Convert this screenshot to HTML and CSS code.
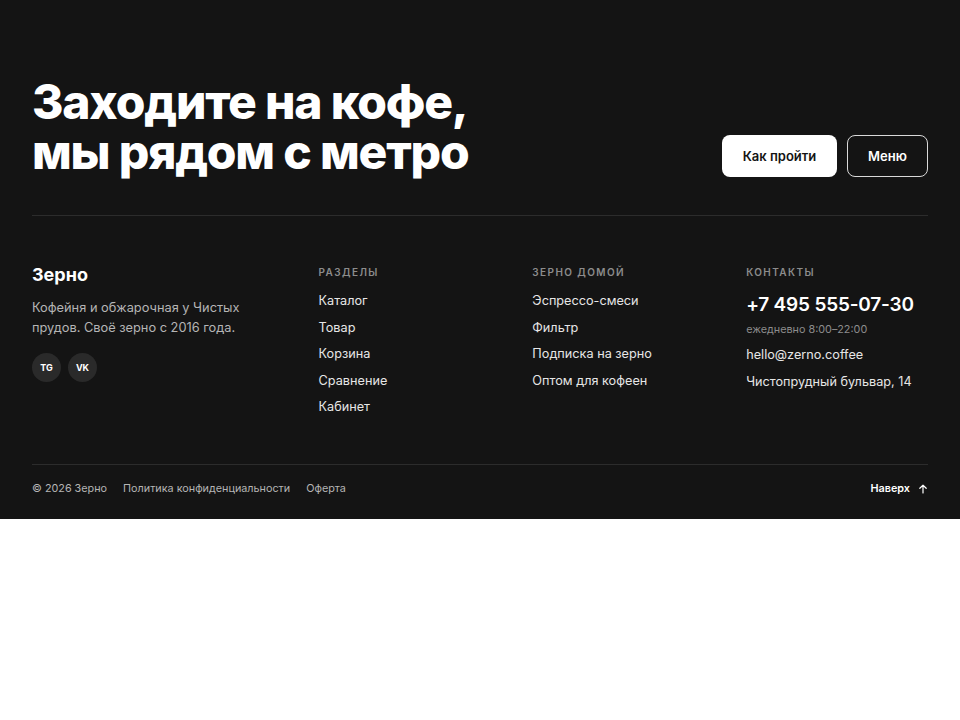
FILE: index.html
```html
<!DOCTYPE html>
<html lang="ru">
<head>
    <meta charset="UTF-8">
    <meta name="viewport" content="width=device-width, initial-scale=1.0">
    <title>Зерно — кофейня</title>
    <link rel="stylesheet" href="styles.css">
</head>
<body>
    <footer class="footer">
        <!-- Призыв зайти -->
        <div class="footer-cta">
            <h2 class="cta-title">Заходите на кофе,<br>мы рядом с метро</h2>
            <div class="cta-actions">
                <a href="#" class="btn btn-light">Как пройти</a>
                <a href="#" class="btn btn-outline">Меню</a>
            </div>
        </div>

        <!-- Колонки -->
        <div class="footer-grid">
            <div class="footer-brand">
                <div class="brand-name">Зерно</div>
                <p class="brand-text">Кофейня и обжарочная у Чистых прудов. Своё зерно с 2016 года.</p>
                <div class="socials">
                    <a href="#" class="social">TG</a>
                    <a href="#" class="social">VK</a>
                </div>
            </div>

            <div class="footer-col">
                <div class="col-title">Разделы</div>
                <a href="#" class="col-link">Каталог</a>
                <a href="#" class="col-link">Товар</a>
                <a href="#" class="col-link">Корзина</a>
                <a href="#" class="col-link">Сравнение</a>
                <a href="#" class="col-link">Кабинет</a>
            </div>

            <div class="footer-col">
                <div class="col-title">Зерно домой</div>
                <a href="#" class="col-link">Эспрессо-смеси</a>
                <a href="#" class="col-link">Фильтр</a>
                <a href="#" class="col-link">Подписка на зерно</a>
                <a href="#" class="col-link">Оптом для кофеен</a>
            </div>

            <div class="footer-col">
                <div class="col-title">Контакты</div>
                <a href="#" class="phone">+7 495 555-07-30</a>
                <div class="hours">ежедневно 8:00–22:00</div>
                <a href="#" class="col-link">hello@zerno.coffee</a>
                <div class="col-link">Чистопрудный бульвар, 14</div>
            </div>
        </div>

        <!-- Нижняя строка -->
        <div class="footer-bottom">
            <div class="bottom-left">
                <span>© 2026 Зерно</span>
                <a href="#">Политика конфиденциальности</a>
                <a href="#">Оферта</a>
            </div>
            <a href="#" class="to-top">Наверх
                <svg width="10" height="10" viewBox="0 0 10 10" fill="none" stroke="currentColor" stroke-width="1.2" stroke-linecap="round" stroke-linejoin="round">
                    <path d="M5 9V1.2M1.8 4.3L5 1.2l3.2 3.1"/>
                </svg>
            </a>
        </div>
    </footer>
</body>
</html>
```

FILE: styles.css
```css
* {
    margin: 0;
    padding: 0;
    box-sizing: border-box;
}

body {
    background: #ffffff;
    font-family: 'Inter', 'Noto Sans', sans-serif;
    -webkit-font-smoothing: antialiased;
}

a {
    color: inherit;
    text-decoration: none;
}

.footer {
    background: #141414;
    color: #ffffff;
    padding: 77px 32px 0;
}

.footer-cta {
    display: flex;
    justify-content: space-between;
    align-items: flex-end;
    padding-bottom: 38px;
    border-bottom: 1px solid #2c2c2c;
}

.cta-title {
    font-size: 48px;
    line-height: 50px;
    font-weight: 800;
    letter-spacing: -0.025em;
}

.cta-actions {
    display: flex;
    gap: 10px;
}

.btn {
    display: inline-flex;
    align-items: center;
    justify-content: center;
    height: 42px;
    border-radius: 8px;
    font-size: 13px;
    font-weight: 600;
}

.btn-light {
    background: #ffffff;
    color: #141414;
    width: 115px;
}

.btn-outline {
    border: 1px solid #d9d9d9;
    color: #ffffff;
    width: 81px;
}

.footer-grid {
    display: grid;
    grid-template-columns: 1.4fr 1fr 1fr 1fr;
    gap: 32px;
    padding: 47px 0 39px;
    border-bottom: 1px solid #2c2c2c;
}

.brand-name {
    font-size: 18px;
    font-weight: 700;
    line-height: 24px;
    margin-bottom: 11px;
}

.brand-text {
    font-size: 12.8px;
    line-height: 20px;
    color: #b5b5b5;
    max-width: 230px;
}

.socials {
    display: flex;
    gap: 7px;
    margin-top: 15px;
}

.social {
    width: 29px;
    height: 29px;
    border-radius: 50%;
    background: #2a2a2a;
    display: flex;
    align-items: center;
    justify-content: center;
    font-size: 9px;
    font-weight: 700;
}

.footer-col {
    display: flex;
    flex-direction: column;
    align-items: flex-start;
    padding-top: 2px;
}

.col-title {
    font-size: 10px;
    line-height: 14px;
    font-weight: 600;
    letter-spacing: 0.14em;
    text-transform: uppercase;
    color: #8c8c8c;
    margin-bottom: 13px;
}

.col-link {
    font-size: 12.7px;
    line-height: 18px;
    color: #e6e6e6;
    margin-bottom: 8.5px;
}

.phone {
    font-size: 19px;
    line-height: 24px;
    font-weight: 600;
    letter-spacing: -0.01em;
    margin-top: 1px;
}

.hours {
    font-size: 10.8px;
    line-height: 14px;
    color: #8c8c8c;
    margin: 6px 0 9px;
}

.footer-bottom {
    display: flex;
    justify-content: space-between;
    align-items: center;
    padding: 17px 0 23px;
    font-size: 10.8px;
    line-height: 14px;
    color: #b5b5b5;
}

.bottom-left {
    display: flex;
    gap: 16px;
}

.to-top {
    display: flex;
    align-items: center;
    gap: 8px;
    color: #ffffff;
    font-weight: 600;
}
```
